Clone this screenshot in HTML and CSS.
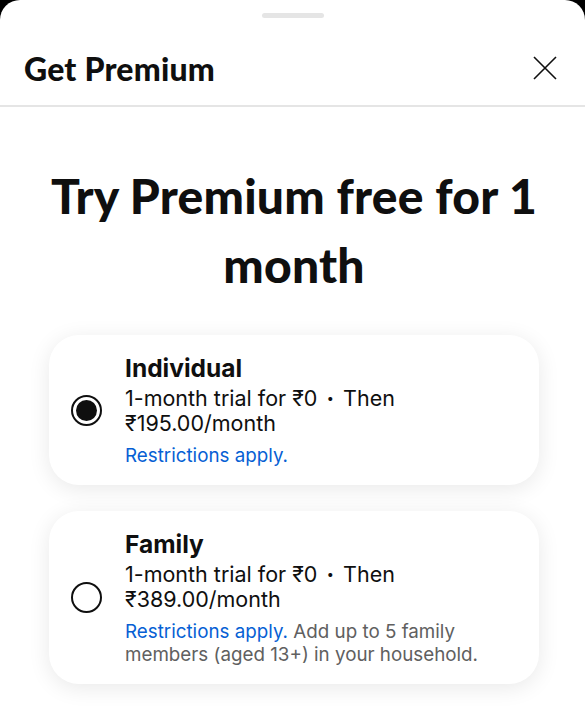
FILE: index.html
```html
<!DOCTYPE html>
<html lang="en">
<head>
<meta charset="utf-8">
<title>Get Premium</title>
<link rel="stylesheet" href="styles.css">
</head>
<body>
<div class="sheet">
  <div class="handle-row"><div class="handle"></div></div>
  <header class="header">
    <h1 class="header-title">Get Premium</h1>
    <button class="close" aria-label="Close">
      <svg width="24" height="24" viewBox="0 0 24 24"><path d="M1 1 L23 23 M23 1 L1 23" stroke="#0f0f0f" stroke-width="1.6" fill="none"/></svg>
    </button>
  </header>
  <main class="content">
    <h2 class="headline">Try Premium free for 1 month</h2>
    <div class="plans">
      <div class="plan">
        <div class="radio"><div class="dot"></div></div>
        <div class="plan-text">
          <div class="plan-name">Individual</div>
          <div class="plan-price">1-month trial for ₹0 <span class="sep">·</span> Then ₹195.00/month</div>
          <div class="plan-note"><span class="link">Restrictions apply.</span></div>
        </div>
      </div>
      <div class="plan">
        <div class="radio"></div>
        <div class="plan-text">
          <div class="plan-name">Family</div>
          <div class="plan-price">1-month trial for ₹0 <span class="sep">·</span> Then ₹389.00/month</div>
          <div class="plan-note"><span class="link">Restrictions apply.</span> Add up to 5 family members (aged 13+) in your household.</div>
        </div>
      </div>
    </div>
  </main>
</div>
</body>
</html>
```
FILE: styles.css
```css
html, body {
  margin: 0;
  padding: 0;
  background: #000;
}
body {
  font-family: "Inter", "Roboto", sans-serif;
  color: #0f0f0f;
}
.sheet {
  background: #fff;
  border-radius: 20px 20px 0 0;
  min-height: 727px;
  overflow: hidden;
}
.handle-row {
  display: flex;
  justify-content: center;
  padding-top: 13px;
}
.handle {
  width: 62px;
  height: 5px;
  border-radius: 3px;
  background: #e5e5e5;
}
.header {
  display: flex;
  align-items: center;
  justify-content: space-between;
  height: 89px;
  padding: 13px 28px 0 24px;
  border-bottom: 2px solid #e5e5e5;
  box-sizing: border-box;
}
.header-title {
  margin: 0;
  font-family: "Lato", sans-serif;
  font-weight: 900;
  font-size: 32px;
  letter-spacing: 0.2px;
}
.close {
  border: 0;
  background: none;
  padding: 0;
  display: flex;
}
.content {
  padding: 54px 46px 0 49px;
}
.headline {
  margin: 0;
  text-align: center;
  font-family: "Lato", sans-serif;
  font-weight: 900;
  font-size: 48px;
  line-height: 69px;
  letter-spacing: 0.2px;
}
.plans {
  display: flex;
  flex-direction: column;
  gap: 26px;
  margin-top: 36px;
}
.plan {
  display: flex;
  align-items: center;
  background: #fff;
  border-radius: 30px;
  box-shadow: 0 4px 22px rgba(0,0,0,0.09);
  padding: 18px 20px 18px 22px;
}
.radio {
  width: 31px;
  height: 31px;
  border: 2px solid #0f0f0f;
  border-radius: 50%;
  box-sizing: border-box;
  flex: none;
  display: flex;
  align-items: center;
  justify-content: center;
  margin-right: 23px;
}
.radio .dot {
  width: 21px;
  height: 21px;
  border-radius: 50%;
  background: #0f0f0f;
}
.plan-name {
  font-weight: 700;
  font-size: 24.5px;
  line-height: 30px;
}
.plan-price {
  font-size: 21.5px;
  line-height: 25px;
  width: 300px;
  margin-top: 3px;
}
.sep {
  font-weight: 800;
  margin: 0 3px;
}
.plan-note {
  font-size: 18.8px;
  line-height: 23px;
  color: #606060;
  margin-top: 8px;
  width: 365px;
}
.link {
  color: #065fd4;
}
```
